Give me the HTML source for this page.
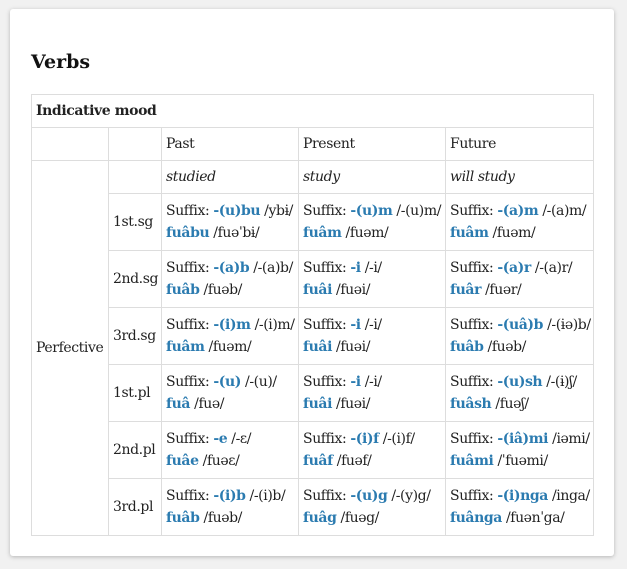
<!DOCTYPE html>
<html><head><meta charset="utf-8"><style>
body{margin:0;background:#f1f1f1;width:627px;height:569px;overflow:hidden;font-family:"DejaVu Serif","Liberation Serif",serif;}
.card{position:absolute;left:10px;top:9px;width:604px;height:547px;background:#fff;border-radius:3px;box-shadow:0 1px 4px rgba(0,0,0,.25);}
h2{position:absolute;left:21px;top:42px;margin:0;font-size:19px;font-weight:bold;color:#111;}
table{position:absolute;left:21px;top:85px;width:563px;border-collapse:collapse;table-layout:fixed;font-size:14px;color:#222;letter-spacing:-0.4px}
td{border:1px solid #ddd;padding:0 4px;line-height:22px;vertical-align:middle;overflow:hidden;white-space:nowrap}
b.l{color:#2b7bb0}
.h td{height:32px}
.r td{height:56px}
i{font-style:italic}
</style></head><body><div class="card">
<h2>Verbs</h2>
<table>
<colgroup><col style="width:77px"><col style="width:53px"><col style="width:137px"><col style="width:147px"><col style="width:148px"></colgroup>
<tr class="h"><td colspan="5"><b>Indicative mood</b></td></tr>
<tr class="h"><td></td><td></td><td>Past</td><td>Present</td><td>Future</td></tr>
<tr class="h"><td rowspan="7">Perfective</td><td></td><td><i>studied</i></td><td><i>study</i></td><td><i>will study</i></td></tr>
<tr class="r"><td>1st.sg</td><td>Suffix: <b class="l">-(u)bu</b> /ybɨ/<br><b class="l">fuâbu</b> /fuəˈbɨ/</td><td>Suffix: <b class="l">-(u)m</b> /-(u)m/<br><b class="l">fuâm</b> /fuəm/</td><td>Suffix: <b class="l">-(a)m</b> /-(a)m/<br><b class="l">fuâm</b> /fuəm/</td></tr>
<tr class="r"><td>2nd.sg</td><td>Suffix: <b class="l">-(a)b</b> /-(a)b/<br><b class="l">fuâb</b> /fuəb/</td><td>Suffix: <b class="l">-i</b> /-i/<br><b class="l">fuâi</b> /fuəi/</td><td>Suffix: <b class="l">-(a)r</b> /-(a)r/<br><b class="l">fuâr</b> /fuər/</td></tr>
<tr class="r"><td>3rd.sg</td><td>Suffix: <b class="l">-(i)m</b> /-(i)m/<br><b class="l">fuâm</b> /fuəm/</td><td>Suffix: <b class="l">-i</b> /-i/<br><b class="l">fuâi</b> /fuəi/</td><td>Suffix: <b class="l">-(uâ)b</b> /-(ɨə)b/<br><b class="l">fuâb</b> /fuəb/</td></tr>
<tr class="r"><td>1st.pl</td><td>Suffix: <b class="l">-(u)</b> /-(u)/<br><b class="l">fuâ</b> /fuə/</td><td>Suffix: <b class="l">-i</b> /-i/<br><b class="l">fuâi</b> /fuəi/</td><td>Suffix: <b class="l">-(u)sh</b> /-(ɨ)ʃ/<br><b class="l">fuâsh</b> /fuəʃ/</td></tr>
<tr class="r"><td>2nd.pl</td><td>Suffix: <b class="l">-e</b> /-ɛ/<br><b class="l">fuâe</b> /fuəɛ/</td><td>Suffix: <b class="l">-(i)f</b> /-(i)f/<br><b class="l">fuâf</b> /fuəf/</td><td>Suffix: <b class="l">-(iâ)mi</b> /iəmi/<br><b class="l">fuâmi</b> /ˈfuəmi/</td></tr>
<tr class="r"><td>3rd.pl</td><td>Suffix: <b class="l">-(i)b</b> /-(i)b/<br><b class="l">fuâb</b> /fuəb/</td><td>Suffix: <b class="l">-(u)g</b> /-(y)g/<br><b class="l">fuâg</b> /fuəg/</td><td>Suffix: <b class="l">-(i)nga</b> /inga/<br><b class="l">fuânga</b> /fuənˈga/</td></tr>
</table>
</div></body></html>
